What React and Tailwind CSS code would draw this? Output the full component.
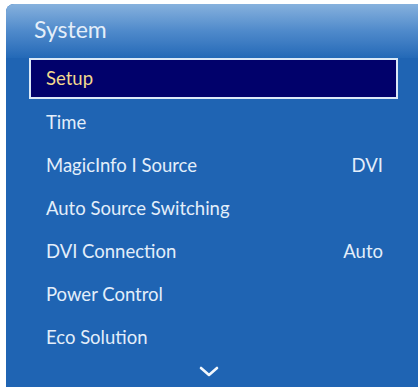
import React from 'react';

const items = [
  { label: 'Time', value: '' },
  { label: 'MagicInfo I Source', value: 'DVI' },
  { label: 'Auto Source Switching', value: '' },
  { label: 'DVI Connection', value: 'Auto' },
  { label: 'Power Control', value: '' },
  { label: 'Eco Solution', value: '' },
];

export default function App() {
  return (
    <div
      className="w-[418px] h-[390px] bg-white pt-1 pl-1.5 pb-[3px] flex"
      style={{ fontFamily: 'Lato, "Noto Sans", sans-serif' }}
    >
      <div className="flex-1 flex flex-col rounded-tl-lg bg-[#1f64b3] overflow-hidden">
        {/* header */}
        <div className="h-[54px] shrink-0 bg-gradient-to-b from-[#86b1dd] via-[#4f8acb] to-[#2369b7] pl-7 pt-[11px]">
          <span className="text-[23px] leading-[28px] text-[#e4eef9]">System</span>
        </div>

        {/* selected row */}
        <div className="h-[41px] shrink-0 ml-[23px] mr-[20px] border-2 border-[#dbe9f7] bg-[#01016b] flex items-center pl-[15px]">
          <span className="text-[18.5px] text-[#f2d98e]">Setup</span>
        </div>

        <div className="h-[2px] shrink-0" />

        {items.map((item) => (
          <div
            key={item.label}
            className="h-[43px] shrink-0 flex items-center justify-between pl-10 pr-[35px] text-[18.5px] text-[#e3eefa]"
          >
            <span>{item.label}</span>
            {item.value && <span>{item.value}</span>}
          </div>
        ))}

        <div className="flex justify-center pt-[7px] pr-[6px]">
          <svg width="20" height="11" viewBox="0 0 20 11" fill="none">
            <path d="M2 2 L10 9 L18 2" stroke="#f2f7fc" strokeWidth="2.6" strokeLinecap="round" strokeLinejoin="round" />
          </svg>
        </div>
      </div>
    </div>
  );
}
